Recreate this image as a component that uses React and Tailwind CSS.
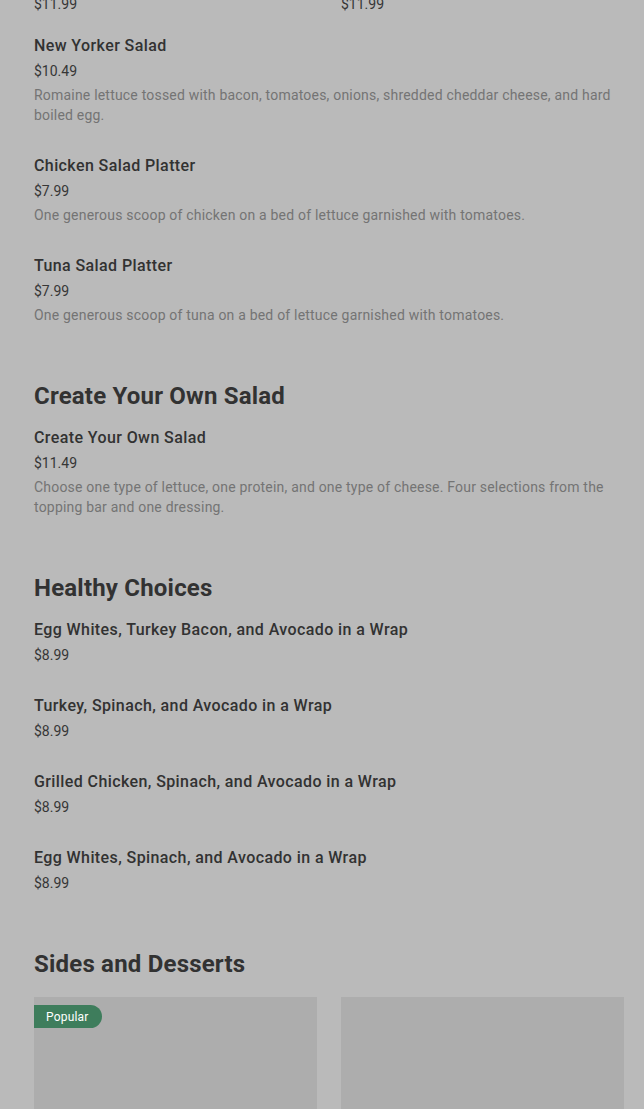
import React from 'react';

const SECTIONS = [
  {
    title: 'Create Your Own Salad',
    items: [
      {
        name: 'Create Your Own Salad',
        price: '$11.49',
        desc: 'Choose one type of lettuce, one protein, and one type of cheese. Four selections from the topping bar and one dressing.',
      },
    ],
  },
  {
    title: 'Healthy Choices',
    items: [
      { name: 'Egg Whites, Turkey Bacon, and Avocado in a Wrap', price: '$8.99' },
      { name: 'Turkey, Spinach, and Avocado in a Wrap', price: '$8.99' },
      { name: 'Grilled Chicken, Spinach, and Avocado in a Wrap', price: '$8.99' },
      { name: 'Egg Whites, Spinach, and Avocado in a Wrap', price: '$8.99' },
    ],
  },
];

const TOP_ITEMS = [
  {
    name: 'New Yorker Salad',
    price: '$10.49',
    desc: 'Romaine lettuce tossed with bacon, tomatoes, onions, shredded cheddar cheese, and hard boiled egg.',
  },
  {
    name: 'Chicken Salad Platter',
    price: '$7.99',
    desc: 'One generous scoop of chicken on a bed of lettuce garnished with tomatoes.',
  },
  {
    name: 'Tuna Salad Platter',
    price: '$7.99',
    desc: 'One generous scoop of tuna on a bed of lettuce garnished with tomatoes.',
  },
];

function MenuItem({ name, price, desc }) {
  return (
    <div className="flex flex-col">
      <div className="text-[16px] leading-5 font-medium tracking-[0.4px] text-[#323232]">{name}</div>
      <div className="mt-[5px] text-[14px] leading-5 text-[#363636]">{price}</div>
      {desc && (
        <p className="mt-1 text-[14px] leading-5 tracking-[0.2px] text-[#747474] pr-2">{desc}</p>
      )}
    </div>
  );
}

function ItemList({ items }) {
  return (
    <div className="flex flex-col gap-[31px]">
      {items.map((it) => (
        <MenuItem key={it.name} {...it} />
      ))}
    </div>
  );
}

export default function App() {
  return (
    <div
      className="min-h-screen bg-[#bababa] overflow-hidden pl-[34px] pr-[20px]"
      style={{ fontFamily: 'Roboto, "Liberation Sans", sans-serif' }}
    >
      {/* tail of the previous grid */}
      <div className="grid grid-cols-2 gap-6 -mt-[6px] text-[14px] leading-5 text-[#363636]">
        <div>$11.99</div>
        <div>$11.99</div>
      </div>

      <div className="mt-[22px]">
        <ItemList items={TOP_ITEMS} />
      </div>

      {SECTIONS.map((s) => (
        <section key={s.title} className="mt-[55px]">
          <h2 className="text-[24px] leading-8 font-bold tracking-[0.2px] text-[#323232] mb-4">
            {s.title}
          </h2>
          <ItemList items={s.items} />
        </section>
      ))}

      <section className="mt-[55px]">
        <h2 className="text-[24px] leading-8 font-bold tracking-[0.2px] text-[#323232]">
          Sides and Desserts
        </h2>
        <div className="grid grid-cols-2 gap-6 mt-[17px]">
          <div className="relative h-[200px] bg-[#adadad]">
            <span className="absolute left-0 top-2 h-[23px] pl-3 pr-[13px] flex items-center rounded-r-full bg-[#3e7d5c] text-white text-[12px] tracking-[0.2px]">
              Popular
            </span>
          </div>
          <div className="h-[200px] bg-[#adadad]" />
        </div>
      </section>
    </div>
  );
}
